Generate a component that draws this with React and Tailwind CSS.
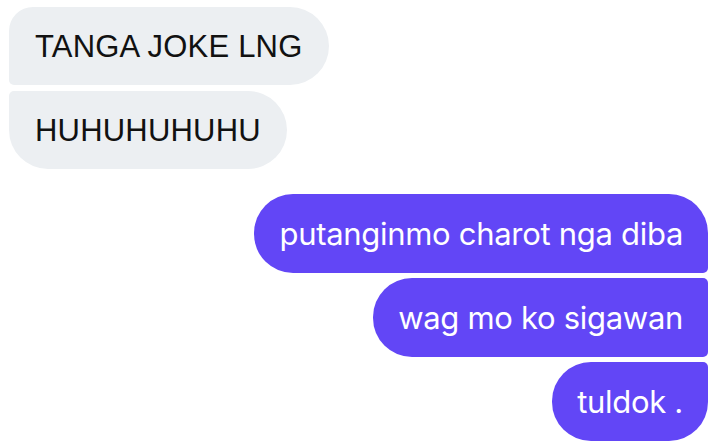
// Chat thread: two incoming grey bubbles, then three outgoing purple ones.

const incoming = [
  { text: 'TANGA JOKE LNG', shape: 'rounded-tl-[24px] rounded-bl-[5px]' },
  { text: 'HUHUHUHUHU', shape: 'rounded-tl-[5px] rounded-bl-[39px]' },
];

const outgoing = [
  { text: 'putanginmo charot nga diba', shape: 'rounded-tr-[39px] rounded-br-[5px]' },
  { text: 'wag mo ko sigawan', shape: 'rounded-tr-[5px] rounded-br-[5px]' },
  { text: 'tuldok .', shape: 'rounded-tr-[5px] rounded-br-[39px]' },
];

export default function App() {
  return (
    <div className="w-[725px] h-[443px] overflow-hidden bg-white pt-[7px] pl-[9px] pr-[17px]">
      <div className="flex flex-col items-start gap-[6px]">
        {incoming.map((m) => (
          <div
            key={m.text}
            className={`h-[78px] flex items-center px-[26px] bg-[#eceff2] text-[#111] text-[31px] leading-none tracking-[0.2px] rounded-r-[39px] ${m.shape}`}
            style={{ fontFamily: '"Liberation Sans", Arial, sans-serif' }}
          >
            {m.text}
          </div>
        ))}
      </div>

      <div className="mt-[25px] flex flex-col items-end gap-[5px]">
        {outgoing.map((m) => (
          <div
            key={m.text}
            className={`h-[79px] flex items-center px-[25px] bg-[#6246f6] text-white text-[31px] leading-none tracking-[-0.3px] rounded-l-[39px] ${m.shape}`}
            style={{ fontFamily: 'Inter, "Noto Sans", sans-serif' }}
          >
            {m.text}
          </div>
        ))}
      </div>
    </div>
  );
}
